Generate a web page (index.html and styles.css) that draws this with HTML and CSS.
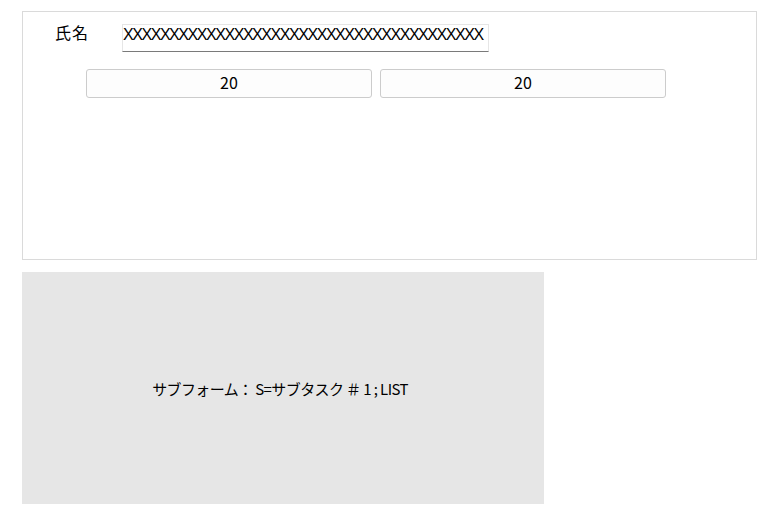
FILE: index.html
```html
<!DOCTYPE html>
<html lang="ja">
<head>
<meta charset="utf-8">
<link rel="stylesheet" href="styles.css">
</head>
<body>
<div class="page">
  <div class="form-box">
    <div class="row">
      <span class="label">氏名</span>
      <div class="input">XXXXXXXXXXXXXXXXXXXXXXXXXXXXXXXXXXXXXXX</div>
    </div>
    <div class="buttons">
      <button class="btn">20</button>
      <button class="btn">20</button>
    </div>
  </div>
  <div class="subform">サブフォーム：&nbsp;S=サブタスク ＃ 1 ; LIST</div>
</div>
</body>
</html>
```
FILE: styles.css
```css
html, body {
  margin: 0;
  padding: 0;
  background: #fff;
}
body {
  font-family: "Noto Sans CJK JP", "Liberation Sans", sans-serif;
  color: #000;
}
.page {
  padding: 11px 0 0 22px;
  display: flex;
  flex-direction: column;
  gap: 12px;
}
.form-box {
  box-sizing: border-box;
  width: 735px;
  height: 249px;
  border: 1px solid #dadada;
  padding: 12px 0 0 32px;
}
.row {
  display: flex;
  align-items: flex-start;
}
.label {
  font-size: 16px;
  line-height: 18px;
  width: 67px;
  margin-top: -1px;
  letter-spacing: 1px;
}
.input {
  box-sizing: border-box;
  width: 367px;
  height: 28px;
  border-top: 1px solid #e6e6e6;
  border-left: 1px solid #e6e6e6;
  border-right: 1px solid #e6e6e6;
  border-bottom: 1px solid #7a7a7a;
  font-family: "Liberation Sans", sans-serif;
  font-size: 16px;
  line-height: 20px;
  letter-spacing: -1.45px;
  overflow: hidden;
  white-space: nowrap;
}
.buttons {
  display: flex;
  gap: 8px;
  margin-top: 17px;
  margin-left: 31px;
}
.btn {
  box-sizing: border-box;
  width: 286px;
  height: 29px;
  border: 1px solid #cccccc;
  border-radius: 3px;
  background: #fdfdfd;
  font-family: "Noto Sans CJK JP", "Liberation Sans", sans-serif;
  font-size: 16px;
  line-height: 23px;
  padding: 0 0 2px;
  color: #000;
}
.subform {
  width: 522px;
  height: 232px;
  background: #e6e6e6;
  display: flex;
  align-items: center;
  justify-content: center;
  font-size: 15px;
  letter-spacing: -0.6px;
  padding-right: 6px;
  box-sizing: border-box;
}
```
